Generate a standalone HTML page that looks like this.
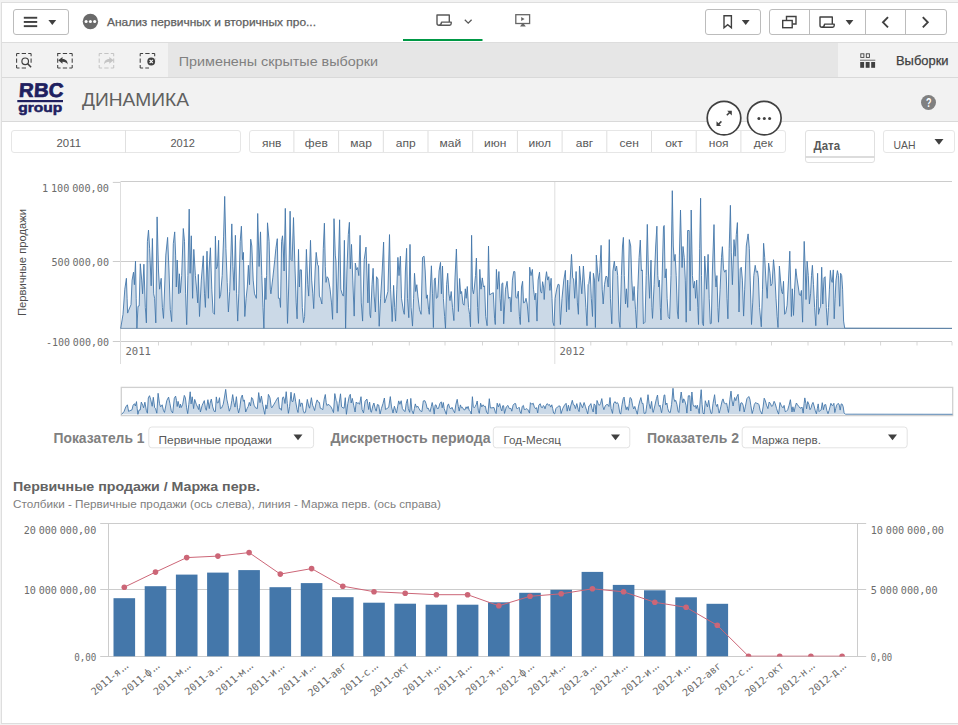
<!DOCTYPE html>
<html lang="ru"><head><meta charset="utf-8"><title>Анализ первичных и вторичных продаж</title>
<style>
html,body{margin:0;padding:0;background:#fff;}
body{width:958px;height:725px;position:relative;overflow:hidden;font-family:"Liberation Sans",sans-serif;}
.b{position:absolute;}
svg.ov{position:absolute;left:0;top:0;}
</style></head><body>
<div class="b" style="left:0px;top:0px;width:958px;height:725px;background:#ffffff;"></div>
<div class="b" style="left:0px;top:0px;width:958px;height:725px;background:#f2f2f2;"></div>
<div class="b" style="left:1px;top:2px;width:957px;height:722px;background:#dedede;"></div>
<div class="b" style="left:2px;top:3px;width:956px;height:720px;background:#ffffff;"></div>
<div class="b" style="left:2px;top:42px;width:956px;height:36px;background:#e6e6e6;"></div>
<div class="b" style="left:2px;top:42px;width:166px;height:36px;background:#f2f2f2;"></div>
<div class="b" style="left:838px;top:42px;width:120px;height:36px;background:#f2f2f2;"></div>
<div class="b" style="left:2px;top:77px;width:956px;height:1px;background:#d9d9d9;"></div>
<div class="b" style="left:2px;top:42px;width:956px;height:1px;background:#dddddd;"></div>
<div class="b" style="left:2px;top:78px;width:956px;height:44px;background:#f2f2f2;"></div>
<div class="b" style="left:2px;top:121px;width:956px;height:1px;background:#d9d9d9;"></div>
<div class="b" style="left:13px;top:9px;width:56px;height:26px;background:#fff;border:1px solid #bcbcbc;box-sizing:border-box;border-radius:3px;"></div>
<div class="b" style="left:705px;top:9px;width:56px;height:26px;background:#fff;border:1px solid #bcbcbc;box-sizing:border-box;border-radius:3px;"></div>
<div class="b" style="left:769px;top:9px;width:178px;height:26px;background:#fff;border:1px solid #bcbcbc;box-sizing:border-box;border-radius:3px;"></div>
<div class="b" style="left:809px;top:9px;width:1px;height:26px;background:#bcbcbc;"></div>
<div class="b" style="left:865px;top:9px;width:1px;height:26px;background:#bcbcbc;"></div>
<div class="b" style="left:905px;top:9px;width:1px;height:26px;background:#bcbcbc;"></div>
<div class="b" style="left:11px;top:130px;width:230px;height:23px;background:#fff;border:1px solid #e6e6e6;box-sizing:border-box;border-radius:3px;"></div>
<div class="b" style="left:125px;top:130px;width:1px;height:23px;background:#e0e0e0;"></div>
<div class="b" style="left:249px;top:130px;width:537px;height:23px;background:#fff;border:1px solid #e6e6e6;box-sizing:border-box;border-radius:3px;"></div>
<div class="b" style="left:805px;top:130px;width:70px;height:33px;background:#fff;border:1px solid #e0e0e0;box-sizing:border-box;border-radius:3px;"></div>
<div class="b" style="left:805px;top:156px;width:70px;height:2px;background:#dcdcdc;"></div>
<div class="b" style="left:883px;top:130px;width:72px;height:23px;background:#fff;border:1px solid #e6e6e6;box-sizing:border-box;border-radius:3px;"></div>
<svg class="ov" width="958" height="725" viewBox="0 0 958 725">
<g fill="#404040"><rect x="23.8" y="16.8" width="13.4" height="1.9"/><rect x="23.8" y="21" width="13.4" height="1.9"/><rect x="23.8" y="25.2" width="13.4" height="1.9"/><path d="M48.4 19.9h7.8l-3.9 5.1z"/></g>
<circle cx="90.4" cy="21.5" r="7.7" fill="#6a6a6a"/><g fill="#fff"><circle cx="86.1" cy="21.5" r="1.55"/><circle cx="90.4" cy="21.5" r="1.55"/><circle cx="94.7" cy="21.5" r="1.55"/></g>
<text x="107.00" y="25.90" font-size="11" font-weight="normal" fill="#606060" font-family='"Liberation Sans", sans-serif' textLength="209.00" lengthAdjust="spacingAndGlyphs" stroke="#606060" stroke-width="0.25">Анализ первичных и вторичных про...</text>
<rect x="403" y="39" width="79.5" height="2" fill="#009845"/>
<g transform="translate(0,0)" fill="none" stroke="#595959" stroke-width="1.4" stroke-linejoin="round"><path d="M449.3 22.1V15H437V23.2Q437 25.2 439 25.2H449.6Q451.2 25.2 451.2 23.6V22.1H441.6Q441.2 25.2 439 25.2"/></g><path d="M464.8 19.7l3.4 3.4 3.4-3.4" fill="none" stroke="#595959" stroke-width="1.3"/>
<rect x="515.8" y="14.7" width="13.8" height="8.8" fill="none" stroke="#666" stroke-width="1.3"/><path d="M522.2 23.5L520 26.5H525.8L523.6 23.5Z" fill="#666"/><path d="M521.2 16.9l3.4 2.1-3.4 2.1z" fill="#666"/>
<path d="M724 15.8h7.4v12l-3.7-3.2-3.7 3.2z" fill="none" stroke="#404040" stroke-width="1.4"/><path d="M741.8 20h7.8l-3.9 5z" fill="#404040"/>
<g fill="none" stroke="#404040" stroke-width="1.4"><path d="M786.5 20.5v-4h9.5v7.5h-3.5"/><rect x="782.7" y="20.5" width="9.5" height="7.2"/></g>
<g transform="translate(383,2)" fill="none" stroke="#404040" stroke-width="1.4" stroke-linejoin="round"><path d="M449.3 22.1V15H437V23.2Q437 25.2 439 25.2H449.6Q451.2 25.2 451.2 23.6V22.1H441.6Q441.2 25.2 439 25.2"/></g><path d="M845.6 20h7.8l-3.9 5z" fill="#404040"/>
<g fill="none" stroke="#404040" stroke-width="1.9"><path d="M888 17.2l-5 5.1 5 5.1"/><path d="M922.8 17.2l5 5.1-5 5.1"/></g>
<rect x="16.6" y="53.4" width="14.5" height="14.5" fill="none" stroke="#404040" stroke-width="1.05" stroke-dasharray="2.9 2.2 4.3 2.2 2.9 0"/><rect x="27.5" y="63.5" width="5" height="5.5" fill="#f2f2f2"/><circle cx="25.2" cy="61.3" r="3.3" fill="#f2f2f2" stroke="#404040" stroke-width="1.2"/><path d="M27.7 63.8l3.4 3.4" stroke="#404040" stroke-width="1.6"/>
<rect x="57.7" y="53.4" width="14.5" height="14.5" fill="none" stroke="#404040" stroke-width="1.05" stroke-dasharray="2.9 2.2 4.3 2.2 2.9 0"/><path d="M58.2 60.2l4.3-3.3v2.1c3.6 0 5.2 2.2 5.2 5.6-1-2.1-2.6-2.9-5.2-2.9v2.1z" fill="#404040"/>
<rect x="99.2" y="53.4" width="14.5" height="14.5" fill="none" stroke="#c4c4c4" stroke-width="1.05" stroke-dasharray="2.9 2.2 4.3 2.2 2.9 0"/><path d="M113.6 60.2l-4.3-3.3v2.1c-3.6 0-5.2 2.2-5.2 5.6 1-2.1 2.6-2.9 5.2-2.9v2.1z" fill="#c4c4c4"/>
<rect x="140.2" y="53.4" width="14.5" height="14.5" fill="none" stroke="#404040" stroke-width="1.05" stroke-dasharray="2.9 2.2 4.3 2.2 2.9 0"/><circle cx="151.2" cy="61.5" r="4.8" fill="#f2f2f2"/><rect x="149" y="63" width="7" height="6" fill="#f2f2f2"/><circle cx="151.2" cy="61.5" r="3.9" fill="#404040"/><path d="M149.6 59.9l3.2 3.2M152.8 59.9l-3.2 3.2" stroke="#fff" stroke-width="1.2"/>
<text x="178.80" y="66.30" font-size="13" font-weight="normal" fill="#808080" font-family='"Liberation Sans", sans-serif' textLength="199.20" lengthAdjust="spacingAndGlyphs" >Применены скрытые выборки</text>
<g fill="#404040"><rect x="860.2" y="62" width="3.9" height="5.8"/><rect x="865.7" y="62" width="3.9" height="5.8"/><rect x="871.2" y="62" width="3.9" height="5.8"/><rect x="860" y="59.7" width="15.3" height="1" fill="#707070"/></g><g fill="none" stroke="#404040" stroke-width="0.9"><rect x="860.8" y="53.8" width="3.1" height="3.6"/><rect x="866.3" y="53.8" width="3.1" height="3.6"/></g>
<text x="896.00" y="64.80" font-size="13" font-weight="normal" fill="#404040" font-family='"Liberation Sans", sans-serif' textLength="52.50" lengthAdjust="spacingAndGlyphs" stroke="#404040" stroke-width="0.25">Выборки</text>
<g fill="#20205f"><rect x="17.3" y="100" width="45.7" height="2.2"/></g>
<text x="18.60" y="97.70" font-size="20" font-weight="bold" fill="#20205f" font-family='"Liberation Sans", sans-serif' textLength="44.40" lengthAdjust="spacingAndGlyphs" stroke="#20205f" stroke-width="0.7" transform="skewX(-4) translate(6.8,-0.5)">RBC</text>
<text x="18.30" y="111.80" font-size="13" font-weight="bold" fill="#20205f" font-family='"Liberation Sans", sans-serif' textLength="44.00" lengthAdjust="spacingAndGlyphs" stroke="#20205f" stroke-width="0.5">group</text>
<text x="82.00" y="106.30" font-size="18.5" font-weight="normal" fill="#606060" font-family='"Liberation Sans", sans-serif' textLength="107.00" lengthAdjust="spacingAndGlyphs" >ДИНАМИКА</text>
<circle cx="928.5" cy="102.5" r="7.5" fill="#808080"/>
<text x="926.00" y="106.90" font-size="12.3" font-weight="bold" fill="#fff" font-family='"Liberation Sans", sans-serif' textLength="5.50" lengthAdjust="spacingAndGlyphs" >?</text>
<text x="56.50" y="147.00" font-size="11.2" font-weight="normal" fill="#595959" font-family='"Liberation Sans", sans-serif' textLength="24.50" lengthAdjust="spacingAndGlyphs" >2011</text>
<text x="170.50" y="147.00" font-size="11.2" font-weight="normal" fill="#595959" font-family='"Liberation Sans", sans-serif' textLength="24.50" lengthAdjust="spacingAndGlyphs" >2012</text>
<text x="261.90" y="147.00" font-size="11.3" font-weight="normal" fill="#595959" font-family='"Liberation Sans", sans-serif' textLength="19.50" lengthAdjust="spacingAndGlyphs" >янв</text>
<rect x="293.40" y="131" width="1" height="21" fill="#dedede"/>
<text x="304.89" y="147.00" font-size="11.3" font-weight="normal" fill="#595959" font-family='"Liberation Sans", sans-serif' textLength="22.92" lengthAdjust="spacingAndGlyphs" >фев</text>
<rect x="338.10" y="131" width="1" height="21" fill="#dedede"/>
<text x="350.25" y="147.00" font-size="11.3" font-weight="normal" fill="#595959" font-family='"Liberation Sans", sans-serif' textLength="21.60" lengthAdjust="spacingAndGlyphs" >мар</text>
<rect x="382.80" y="131" width="1" height="21" fill="#dedede"/>
<text x="395.83" y="147.00" font-size="11.3" font-weight="normal" fill="#595959" font-family='"Liberation Sans", sans-serif' textLength="19.85" lengthAdjust="spacingAndGlyphs" >апр</text>
<rect x="427.50" y="131" width="1" height="21" fill="#dedede"/>
<text x="439.64" y="147.00" font-size="11.3" font-weight="normal" fill="#595959" font-family='"Liberation Sans", sans-serif' textLength="21.63" lengthAdjust="spacingAndGlyphs" >май</text>
<rect x="472.20" y="131" width="1" height="21" fill="#dedede"/>
<text x="483.99" y="147.00" font-size="11.3" font-weight="normal" fill="#595959" font-family='"Liberation Sans", sans-serif' textLength="22.33" lengthAdjust="spacingAndGlyphs" >июн</text>
<rect x="516.90" y="131" width="1" height="21" fill="#dedede"/>
<text x="528.63" y="147.00" font-size="11.3" font-weight="normal" fill="#595959" font-family='"Liberation Sans", sans-serif' textLength="22.44" lengthAdjust="spacingAndGlyphs" >июл</text>
<rect x="561.60" y="131" width="1" height="21" fill="#dedede"/>
<text x="575.84" y="147.00" font-size="11.3" font-weight="normal" fill="#595959" font-family='"Liberation Sans", sans-serif' textLength="17.42" lengthAdjust="spacingAndGlyphs" >авг</text>
<rect x="606.30" y="131" width="1" height="21" fill="#dedede"/>
<text x="619.60" y="147.00" font-size="11.3" font-weight="normal" fill="#595959" font-family='"Liberation Sans", sans-serif' textLength="19.30" lengthAdjust="spacingAndGlyphs" >сен</text>
<rect x="651.00" y="131" width="1" height="21" fill="#dedede"/>
<text x="665.17" y="147.00" font-size="11.3" font-weight="normal" fill="#595959" font-family='"Liberation Sans", sans-serif' textLength="17.55" lengthAdjust="spacingAndGlyphs" >окт</text>
<rect x="695.70" y="131" width="1" height="21" fill="#dedede"/>
<text x="708.75" y="147.00" font-size="11.3" font-weight="normal" fill="#595959" font-family='"Liberation Sans", sans-serif' textLength="19.80" lengthAdjust="spacingAndGlyphs" >ноя</text>
<rect x="740.40" y="131" width="1" height="21" fill="#dedede"/>
<text x="753.89" y="147.00" font-size="11.3" font-weight="normal" fill="#595959" font-family='"Liberation Sans", sans-serif' textLength="18.92" lengthAdjust="spacingAndGlyphs" >дек</text>
<g fill="#ffffff" stroke="#404040" stroke-width="1.7"><circle cx="724" cy="118.1" r="16.8"/><circle cx="764.3" cy="118.1" r="16.8"/></g>
<g fill="#404040"><circle cx="758.9" cy="118.4" r="1.5"/><circle cx="764.3" cy="118.4" r="1.5"/><circle cx="769.6" cy="118.4" r="1.5"/></g>
<g fill="#404040" stroke="#404040" stroke-width="1.5"><path d="M726.8 115.3l3.2-3.2"/><path d="M727.2 110.8h4.6v4.6z" stroke="none"/><path d="M721.4 121.4l-3.2 3.2"/><path d="M716.5 121.3v4.6h4.6z" stroke="none"/></g>
<text x="813.50" y="149.50" font-size="12.5" font-weight="bold" fill="#595959" font-family='"Liberation Sans", sans-serif' textLength="26.50" lengthAdjust="spacingAndGlyphs" >Дата</text>
<text x="893.50" y="149.00" font-size="11.5" font-weight="normal" fill="#595959" font-family='"Liberation Sans", sans-serif' textLength="22.00" lengthAdjust="spacingAndGlyphs" >UAH</text>
<path d="M934.5 139h9l-4.5 5.8z" fill="#404040"/>
<g stroke="#cccccc" stroke-width="1" fill="none"><path d="M120.5 181.5H952"/><path d="M120.5 261.5H952"/><path d="M112.8 341.5H952"/><path d="M112.8 182.4H120.5M112.8 261.5H120.5"/></g>
<g stroke="#dedede" stroke-width="1" fill="none"><path d="M120.5 182V364"/><path d="M554.8 182V364"/></g>
<path d="M158.5 342v3.5M191.3 342v3.5M228.4 342v3.5M264.0 342v3.5M300.7 342v3.5M336.0 342v3.5M372.5 342v3.5M409.3 342v3.5M445.0 342v3.5M482.5 342v3.5M518.4 342v3.5M590.8 342v3.5M626.8 342v3.5M662.6 342v3.5M698.5 342v3.5M736.0 342v3.5M771.5 342v3.5M808.0 342v3.5M844.6 342v3.5M880.6 342v3.5M917.0 342v3.5M952.0 342v3.5" stroke="#d8d8d8" stroke-width="1" fill="none"/>
<text x="42.00" y="192.00" font-size="10.5" fill="#6c6c6c" font-family='"DejaVu Sans Mono", monospace' style="word-spacing:-3.4px" textLength="67.00" lengthAdjust="spacingAndGlyphs">1 100 000,00</text>
<text x="51.50" y="266.00" font-size="10.5" fill="#6c6c6c" font-family='"DejaVu Sans Mono", monospace' style="word-spacing:-3.4px" textLength="57.50" lengthAdjust="spacingAndGlyphs">500 000,00</text>
<text x="46.00" y="346.00" font-size="10.5" fill="#6c6c6c" font-family='"DejaVu Sans Mono", monospace' style="word-spacing:-3.4px" textLength="63.00" lengthAdjust="spacingAndGlyphs">-100 000,00</text>
<text x="125.50" y="354.90" font-size="10.5" fill="#6c6c6c" font-family='"DejaVu Sans Mono", monospace' style="word-spacing:-3.4px" textLength="25.50" lengthAdjust="spacingAndGlyphs">2011</text>
<text x="559.50" y="354.90" font-size="10.5" fill="#6c6c6c" font-family='"DejaVu Sans Mono", monospace' style="word-spacing:-3.4px" textLength="25.50" lengthAdjust="spacingAndGlyphs">2012</text>
<text transform="translate(26,316) rotate(-90)" font-size="11" fill="#4d4d4d" font-family='"Liberation Sans", sans-serif' textLength="107" lengthAdjust="spacingAndGlyphs">Первичные продажи</text>
<polygon points="120.5,328.4 120.7,328.4 123.0,314.3 124.8,289.2 126.4,278.3 127.1,298.3 127.6,313.1 128.7,310.2 131.0,304.7 132.1,280.1 133.5,272.2 134.4,284.7 135.5,261.2 136.2,298.3 136.9,328.4 138.0,306.3 139.2,305.9 140.3,263.8 141.7,280.1 142.6,293.8 143.9,264.2 145.3,307.4 146.4,322.9 147.4,241.4 148.5,230.1 149.6,248.3 151.2,285.8 152.4,238.5 153.7,293.8 154.6,298.3 155.8,322.9 157.1,216.9 158.5,271.0 159.6,289.2 161.2,278.3 162.4,307.4 163.5,318.4 165.8,255.1 167.6,237.4 169.0,271.0 170.3,309.7 171.7,321.6 173.3,243.7 174.7,231.9 175.6,255.1 176.3,287.0 177.2,260.1 178.1,280.1 178.8,293.8 179.4,273.8 180.4,292.7 181.7,275.6 183.3,228.5 184.5,241.4 185.6,293.8 186.7,324.7 187.9,275.6 189.2,209.1 190.1,273.3 191.3,235.8 192.6,298.3 193.8,249.4 195.4,275.6 197.0,293.8 197.7,302.9 198.3,274.4 199.5,316.5 201.3,280.1 203.3,255.8 204.5,293.8 205.4,307.4 207.0,251.2 208.4,298.3 209.0,271.0 210.4,247.8 211.8,289.2 213.1,312.5 214.5,314.3 215.4,236.2 216.3,268.8 217.5,266.5 218.6,240.3 219.5,298.3 220.6,294.9 222.2,275.6 223.6,236.9 224.7,196.4 225.9,248.3 227.2,282.4 228.4,312.0 229.7,291.5 230.9,255.1 231.8,223.9 232.9,266.5 234.1,290.4 235.4,235.3 236.6,293.8 237.7,321.1 238.8,293.8 240.2,241.4 241.4,226.2 242.5,259.7 243.4,252.4 244.8,316.5 246.1,298.3 247.3,287.0 248.4,265.3 249.5,284.7 250.7,239.2 251.8,246.0 253.2,280.1 254.5,293.8 256.4,298.3 257.7,213.5 259.1,266.5 260.5,231.9 261.8,275.6 263.0,307.4 263.9,328.4 265.0,277.9 265.9,299.5 266.6,275.6 267.5,222.8 269.1,241.4 270.3,289.2 270.9,293.8 272.8,277.9 274.8,259.7 275.9,248.3 277.3,238.7 278.4,298.3 279.6,298.3 280.5,307.4 281.6,241.4 282.5,235.8 283.2,246.0 284.1,271.0 285.3,208.4 286.4,271.0 287.5,323.4 288.7,287.0 290.1,211.2 291.0,259.7 292.1,260.8 293.5,217.6 294.8,261.9 296.2,302.9 297.1,318.8 298.5,249.4 299.4,287.0 300.1,269.9 301.4,269.9 302.3,307.4 303.5,322.7 304.6,316.5 306.4,249.4 307.8,284.7 308.7,296.1 310.5,240.3 311.7,280.1 312.8,293.8 313.7,308.6 315.1,271.0 316.2,252.4 317.6,264.7 318.5,266.0 319.4,296.1 320.5,298.3 321.9,304.0 323.3,248.3 324.4,223.2 325.3,266.5 326.0,282.4 327.1,276.7 328.3,278.3 330.1,289.2 331.5,302.9 332.6,319.3 334.0,218.7 335.3,255.1 336.0,261.9 337.1,313.1 338.3,271.0 339.6,219.8 340.8,289.2 342.1,293.8 343.3,296.1 344.4,240.3 345.6,328.4 346.9,271.0 348.3,234.6 349.4,222.3 350.3,268.8 351.5,244.4 352.8,280.1 354.2,316.1 355.3,263.1 356.5,269.9 357.6,267.6 358.8,275.6 360.1,235.3 361.3,302.9 362.6,321.1 364.2,259.7 366.0,247.1 367.2,280.1 367.9,302.9 368.8,263.8 369.9,314.3 370.6,317.7 372.0,284.7 373.1,268.3 374.2,296.1 375.4,312.0 376.5,276.7 377.9,279.0 379.2,326.3 380.6,298.3 382.2,271.0 383.6,242.1 384.7,302.9 386.1,298.3 387.9,291.5 389.5,234.6 390.6,289.2 392.2,321.6 393.6,285.4 394.7,307.4 395.6,321.1 396.8,289.2 397.9,257.4 399.0,275.6 400.4,256.2 401.5,298.3 403.4,310.9 404.3,314.3 405.4,271.0 406.6,248.3 407.5,298.3 408.8,317.7 410.0,244.4 411.1,307.4 412.5,326.1 413.6,298.3 414.5,273.3 415.7,291.5 416.8,284.7 417.9,296.1 419.5,309.7 421.1,314.3 422.5,257.4 424.1,256.2 425.2,271.0 426.4,298.3 427.3,294.9 428.6,309.7 429.3,314.3 430.4,287.0 431.4,265.8 432.5,293.8 433.4,327.5 434.3,280.1 435.2,277.9 436.4,298.3 437.7,297.2 439.1,271.0 440.5,262.4 441.4,293.8 442.5,266.0 443.4,298.3 444.6,316.5 445.5,328.4 446.6,284.7 447.7,273.3 448.9,293.8 450.0,300.6 451.2,291.5 452.5,307.4 453.9,320.6 455.0,277.9 456.4,249.0 457.5,287.0 458.4,311.5 459.6,278.5 460.7,293.8 461.6,291.5 463.0,304.0 464.1,305.2 465.3,288.8 466.2,298.3 467.3,286.5 468.5,307.4 469.6,314.3 470.5,326.8 471.6,235.3 472.5,289.2 473.5,293.8 474.4,287.0 475.5,275.6 476.4,258.1 477.6,307.4 478.5,323.4 479.8,269.4 481.0,289.2 482.3,277.9 483.5,287.0 484.6,285.8 485.7,316.5 487.1,325.7 488.5,246.0 489.6,294.9 491.2,293.8 493.3,292.7 494.6,318.8 495.3,324.5 496.4,269.4 497.6,289.2 498.9,271.5 500.1,298.3 501.0,310.9 501.9,283.6 502.8,282.9 503.7,323.8 505.5,289.2 507.1,281.3 508.5,298.3 510.1,297.2 511.0,312.0 512.4,280.1 513.7,271.5 514.9,271.7 515.8,297.2 516.9,298.3 518.3,291.1 519.4,316.5 520.3,324.5 521.5,287.0 522.6,281.3 523.5,302.9 524.9,302.2 526.0,298.3 527.2,304.0 528.8,322.2 529.7,267.2 531.0,275.6 532.4,269.4 533.5,289.2 534.9,299.9 535.8,293.1 537.0,321.1 538.1,280.1 539.5,272.2 540.6,291.5 541.7,293.1 542.6,281.7 543.6,287.0 544.2,299.5 545.4,280.1 546.5,271.7 547.7,280.1 548.8,276.7 549.9,290.4 551.1,278.3 552.0,298.3 552.9,322.2 554.0,325.7 555.1,298.3 556.7,289.2 558.1,284.2 559.2,284.7 560.4,324.5 562.0,298.3 563.8,280.1 565.4,270.4 566.5,312.0 567.7,280.1 569.0,309.7 569.9,284.7 571.5,254.4 572.7,277.9 573.6,279.0 574.7,298.3 576.1,271.5 577.4,302.9 578.4,314.3 579.5,266.0 580.6,280.1 581.8,293.8 583.4,266.0 584.7,287.0 585.9,307.4 587.0,325.7 588.1,284.7 588.8,283.6 590.2,271.7 591.3,298.3 592.5,316.5 593.4,273.3 594.5,280.1 595.4,327.5 596.3,255.1 597.5,271.0 598.6,281.3 599.7,272.2 601.1,245.3 602.2,289.2 603.2,304.0 604.5,284.7 605.9,276.3 607.0,276.7 608.2,287.0 609.3,239.6 610.4,298.3 611.8,323.8 612.9,271.0 614.3,261.2 615.4,271.0 616.6,266.0 617.7,275.6 619.1,321.1 620.0,327.5 621.4,275.6 622.5,246.0 623.4,237.4 624.3,275.6 625.5,304.0 626.4,288.8 627.7,307.4 628.6,271.0 629.3,239.6 630.7,246.0 631.8,280.1 633.0,300.6 634.1,286.5 635.5,309.7 636.6,327.9 637.8,289.2 639.1,257.4 640.3,240.1 641.4,271.0 642.3,269.9 643.4,323.8 645.0,322.2 646.2,275.6 647.3,224.4 648.4,271.0 649.6,298.3 651.0,260.1 651.9,307.4 652.5,318.4 654.1,284.7 655.7,246.0 656.9,226.2 657.8,275.6 658.7,287.0 659.4,280.1 660.3,307.4 661.0,320.0 662.3,271.0 663.5,226.7 664.2,225.5 665.1,277.9 666.2,268.8 667.1,298.3 668.2,316.5 669.6,318.8 671.0,275.6 672.3,190.7 673.3,246.0 674.2,260.8 675.1,254.4 676.2,275.6 677.4,312.0 678.3,318.8 679.4,255.1 680.5,210.0 681.4,246.0 682.1,267.6 683.0,246.5 684.2,257.4 685.3,280.1 686.2,322.2 687.6,230.5 689.2,230.5 690.1,310.9 691.2,210.0 692.4,275.6 693.5,288.1 694.6,281.3 695.6,298.3 696.7,280.1 697.8,307.4 698.5,324.5 699.7,248.3 700.6,198.2 701.5,275.6 702.4,323.4 703.5,325.7 704.7,256.2 705.6,271.0 706.7,289.2 708.1,254.4 709.2,298.3 710.3,323.8 711.3,323.4 712.4,271.0 714.0,224.6 714.9,271.0 716.0,287.0 716.9,275.6 717.9,307.4 718.5,322.2 720.1,289.2 721.5,257.4 722.4,246.7 723.5,268.8 724.7,272.2 726.1,269.9 727.0,298.3 727.9,318.8 729.2,248.3 730.4,205.3 731.3,252.8 732.4,284.7 734.0,239.6 735.2,256.2 736.3,234.6 737.4,222.6 738.3,271.0 739.0,312.0 740.2,268.8 741.3,267.2 742.4,280.1 743.6,316.1 744.7,289.2 746.3,246.0 748.1,233.9 749.3,248.3 750.2,280.1 751.5,324.5 752.7,302.9 753.8,275.6 755.2,265.3 756.3,272.2 757.5,271.0 758.4,277.9 759.5,307.4 761.3,326.8 762.5,289.2 763.6,243.3 764.7,257.4 765.9,280.1 767.2,298.3 768.6,263.1 770.0,273.3 770.9,285.8 772.1,283.6 773.5,259.7 774.6,271.0 776.0,298.3 777.1,316.5 778.0,327.5 779.4,266.0 780.5,280.1 781.6,291.5 782.6,293.8 783.5,281.3 784.6,314.3 785.7,313.1 787.1,305.2 788.5,280.1 789.8,251.2 790.8,289.2 791.4,316.5 792.3,288.8 793.5,315.4 794.6,289.2 795.8,268.8 796.9,277.9 798.3,287.0 799.4,294.9 800.5,295.6 801.4,290.4 802.6,322.2 803.5,271.0 804.2,241.4 805.3,271.0 806.0,299.5 807.1,261.2 808.3,275.6 809.4,304.0 810.6,293.8 811.5,275.6 812.4,265.3 813.5,284.7 814.6,307.4 815.8,325.7 816.7,298.3 817.6,273.3 818.5,314.3 819.7,308.6 820.6,306.3 821.7,267.2 822.8,304.0 824.0,277.9 825.1,276.7 826.3,307.4 827.4,325.2 828.5,307.4 829.4,289.2 830.4,270.4 831.3,280.1 832.2,282.4 833.3,269.9 834.2,318.8 835.1,298.3 836.0,280.1 837.4,270.6 838.5,275.6 839.7,306.3 840.6,273.3 841.7,275.6 842.6,289.2 843.6,321.1 844.7,328.2 952,328.4 952,328.4" fill="#4477aa" fill-opacity="0.28"/>
<polyline points="120.7,328.4 123.0,314.3 124.8,289.2 126.4,278.3 127.1,298.3 127.6,313.1 128.7,310.2 131.0,304.7 132.1,280.1 133.5,272.2 134.4,284.7 135.5,261.2 136.2,298.3 136.9,328.4 138.0,306.3 139.2,305.9 140.3,263.8 141.7,280.1 142.6,293.8 143.9,264.2 145.3,307.4 146.4,322.9 147.4,241.4 148.5,230.1 149.6,248.3 151.2,285.8 152.4,238.5 153.7,293.8 154.6,298.3 155.8,322.9 157.1,216.9 158.5,271.0 159.6,289.2 161.2,278.3 162.4,307.4 163.5,318.4 165.8,255.1 167.6,237.4 169.0,271.0 170.3,309.7 171.7,321.6 173.3,243.7 174.7,231.9 175.6,255.1 176.3,287.0 177.2,260.1 178.1,280.1 178.8,293.8 179.4,273.8 180.4,292.7 181.7,275.6 183.3,228.5 184.5,241.4 185.6,293.8 186.7,324.7 187.9,275.6 189.2,209.1 190.1,273.3 191.3,235.8 192.6,298.3 193.8,249.4 195.4,275.6 197.0,293.8 197.7,302.9 198.3,274.4 199.5,316.5 201.3,280.1 203.3,255.8 204.5,293.8 205.4,307.4 207.0,251.2 208.4,298.3 209.0,271.0 210.4,247.8 211.8,289.2 213.1,312.5 214.5,314.3 215.4,236.2 216.3,268.8 217.5,266.5 218.6,240.3 219.5,298.3 220.6,294.9 222.2,275.6 223.6,236.9 224.7,196.4 225.9,248.3 227.2,282.4 228.4,312.0 229.7,291.5 230.9,255.1 231.8,223.9 232.9,266.5 234.1,290.4 235.4,235.3 236.6,293.8 237.7,321.1 238.8,293.8 240.2,241.4 241.4,226.2 242.5,259.7 243.4,252.4 244.8,316.5 246.1,298.3 247.3,287.0 248.4,265.3 249.5,284.7 250.7,239.2 251.8,246.0 253.2,280.1 254.5,293.8 256.4,298.3 257.7,213.5 259.1,266.5 260.5,231.9 261.8,275.6 263.0,307.4 263.9,328.4 265.0,277.9 265.9,299.5 266.6,275.6 267.5,222.8 269.1,241.4 270.3,289.2 270.9,293.8 272.8,277.9 274.8,259.7 275.9,248.3 277.3,238.7 278.4,298.3 279.6,298.3 280.5,307.4 281.6,241.4 282.5,235.8 283.2,246.0 284.1,271.0 285.3,208.4 286.4,271.0 287.5,323.4 288.7,287.0 290.1,211.2 291.0,259.7 292.1,260.8 293.5,217.6 294.8,261.9 296.2,302.9 297.1,318.8 298.5,249.4 299.4,287.0 300.1,269.9 301.4,269.9 302.3,307.4 303.5,322.7 304.6,316.5 306.4,249.4 307.8,284.7 308.7,296.1 310.5,240.3 311.7,280.1 312.8,293.8 313.7,308.6 315.1,271.0 316.2,252.4 317.6,264.7 318.5,266.0 319.4,296.1 320.5,298.3 321.9,304.0 323.3,248.3 324.4,223.2 325.3,266.5 326.0,282.4 327.1,276.7 328.3,278.3 330.1,289.2 331.5,302.9 332.6,319.3 334.0,218.7 335.3,255.1 336.0,261.9 337.1,313.1 338.3,271.0 339.6,219.8 340.8,289.2 342.1,293.8 343.3,296.1 344.4,240.3 345.6,328.4 346.9,271.0 348.3,234.6 349.4,222.3 350.3,268.8 351.5,244.4 352.8,280.1 354.2,316.1 355.3,263.1 356.5,269.9 357.6,267.6 358.8,275.6 360.1,235.3 361.3,302.9 362.6,321.1 364.2,259.7 366.0,247.1 367.2,280.1 367.9,302.9 368.8,263.8 369.9,314.3 370.6,317.7 372.0,284.7 373.1,268.3 374.2,296.1 375.4,312.0 376.5,276.7 377.9,279.0 379.2,326.3 380.6,298.3 382.2,271.0 383.6,242.1 384.7,302.9 386.1,298.3 387.9,291.5 389.5,234.6 390.6,289.2 392.2,321.6 393.6,285.4 394.7,307.4 395.6,321.1 396.8,289.2 397.9,257.4 399.0,275.6 400.4,256.2 401.5,298.3 403.4,310.9 404.3,314.3 405.4,271.0 406.6,248.3 407.5,298.3 408.8,317.7 410.0,244.4 411.1,307.4 412.5,326.1 413.6,298.3 414.5,273.3 415.7,291.5 416.8,284.7 417.9,296.1 419.5,309.7 421.1,314.3 422.5,257.4 424.1,256.2 425.2,271.0 426.4,298.3 427.3,294.9 428.6,309.7 429.3,314.3 430.4,287.0 431.4,265.8 432.5,293.8 433.4,327.5 434.3,280.1 435.2,277.9 436.4,298.3 437.7,297.2 439.1,271.0 440.5,262.4 441.4,293.8 442.5,266.0 443.4,298.3 444.6,316.5 445.5,328.4 446.6,284.7 447.7,273.3 448.9,293.8 450.0,300.6 451.2,291.5 452.5,307.4 453.9,320.6 455.0,277.9 456.4,249.0 457.5,287.0 458.4,311.5 459.6,278.5 460.7,293.8 461.6,291.5 463.0,304.0 464.1,305.2 465.3,288.8 466.2,298.3 467.3,286.5 468.5,307.4 469.6,314.3 470.5,326.8 471.6,235.3 472.5,289.2 473.5,293.8 474.4,287.0 475.5,275.6 476.4,258.1 477.6,307.4 478.5,323.4 479.8,269.4 481.0,289.2 482.3,277.9 483.5,287.0 484.6,285.8 485.7,316.5 487.1,325.7 488.5,246.0 489.6,294.9 491.2,293.8 493.3,292.7 494.6,318.8 495.3,324.5 496.4,269.4 497.6,289.2 498.9,271.5 500.1,298.3 501.0,310.9 501.9,283.6 502.8,282.9 503.7,323.8 505.5,289.2 507.1,281.3 508.5,298.3 510.1,297.2 511.0,312.0 512.4,280.1 513.7,271.5 514.9,271.7 515.8,297.2 516.9,298.3 518.3,291.1 519.4,316.5 520.3,324.5 521.5,287.0 522.6,281.3 523.5,302.9 524.9,302.2 526.0,298.3 527.2,304.0 528.8,322.2 529.7,267.2 531.0,275.6 532.4,269.4 533.5,289.2 534.9,299.9 535.8,293.1 537.0,321.1 538.1,280.1 539.5,272.2 540.6,291.5 541.7,293.1 542.6,281.7 543.6,287.0 544.2,299.5 545.4,280.1 546.5,271.7 547.7,280.1 548.8,276.7 549.9,290.4 551.1,278.3 552.0,298.3 552.9,322.2 554.0,325.7 555.1,298.3 556.7,289.2 558.1,284.2 559.2,284.7 560.4,324.5 562.0,298.3 563.8,280.1 565.4,270.4 566.5,312.0 567.7,280.1 569.0,309.7 569.9,284.7 571.5,254.4 572.7,277.9 573.6,279.0 574.7,298.3 576.1,271.5 577.4,302.9 578.4,314.3 579.5,266.0 580.6,280.1 581.8,293.8 583.4,266.0 584.7,287.0 585.9,307.4 587.0,325.7 588.1,284.7 588.8,283.6 590.2,271.7 591.3,298.3 592.5,316.5 593.4,273.3 594.5,280.1 595.4,327.5 596.3,255.1 597.5,271.0 598.6,281.3 599.7,272.2 601.1,245.3 602.2,289.2 603.2,304.0 604.5,284.7 605.9,276.3 607.0,276.7 608.2,287.0 609.3,239.6 610.4,298.3 611.8,323.8 612.9,271.0 614.3,261.2 615.4,271.0 616.6,266.0 617.7,275.6 619.1,321.1 620.0,327.5 621.4,275.6 622.5,246.0 623.4,237.4 624.3,275.6 625.5,304.0 626.4,288.8 627.7,307.4 628.6,271.0 629.3,239.6 630.7,246.0 631.8,280.1 633.0,300.6 634.1,286.5 635.5,309.7 636.6,327.9 637.8,289.2 639.1,257.4 640.3,240.1 641.4,271.0 642.3,269.9 643.4,323.8 645.0,322.2 646.2,275.6 647.3,224.4 648.4,271.0 649.6,298.3 651.0,260.1 651.9,307.4 652.5,318.4 654.1,284.7 655.7,246.0 656.9,226.2 657.8,275.6 658.7,287.0 659.4,280.1 660.3,307.4 661.0,320.0 662.3,271.0 663.5,226.7 664.2,225.5 665.1,277.9 666.2,268.8 667.1,298.3 668.2,316.5 669.6,318.8 671.0,275.6 672.3,190.7 673.3,246.0 674.2,260.8 675.1,254.4 676.2,275.6 677.4,312.0 678.3,318.8 679.4,255.1 680.5,210.0 681.4,246.0 682.1,267.6 683.0,246.5 684.2,257.4 685.3,280.1 686.2,322.2 687.6,230.5 689.2,230.5 690.1,310.9 691.2,210.0 692.4,275.6 693.5,288.1 694.6,281.3 695.6,298.3 696.7,280.1 697.8,307.4 698.5,324.5 699.7,248.3 700.6,198.2 701.5,275.6 702.4,323.4 703.5,325.7 704.7,256.2 705.6,271.0 706.7,289.2 708.1,254.4 709.2,298.3 710.3,323.8 711.3,323.4 712.4,271.0 714.0,224.6 714.9,271.0 716.0,287.0 716.9,275.6 717.9,307.4 718.5,322.2 720.1,289.2 721.5,257.4 722.4,246.7 723.5,268.8 724.7,272.2 726.1,269.9 727.0,298.3 727.9,318.8 729.2,248.3 730.4,205.3 731.3,252.8 732.4,284.7 734.0,239.6 735.2,256.2 736.3,234.6 737.4,222.6 738.3,271.0 739.0,312.0 740.2,268.8 741.3,267.2 742.4,280.1 743.6,316.1 744.7,289.2 746.3,246.0 748.1,233.9 749.3,248.3 750.2,280.1 751.5,324.5 752.7,302.9 753.8,275.6 755.2,265.3 756.3,272.2 757.5,271.0 758.4,277.9 759.5,307.4 761.3,326.8 762.5,289.2 763.6,243.3 764.7,257.4 765.9,280.1 767.2,298.3 768.6,263.1 770.0,273.3 770.9,285.8 772.1,283.6 773.5,259.7 774.6,271.0 776.0,298.3 777.1,316.5 778.0,327.5 779.4,266.0 780.5,280.1 781.6,291.5 782.6,293.8 783.5,281.3 784.6,314.3 785.7,313.1 787.1,305.2 788.5,280.1 789.8,251.2 790.8,289.2 791.4,316.5 792.3,288.8 793.5,315.4 794.6,289.2 795.8,268.8 796.9,277.9 798.3,287.0 799.4,294.9 800.5,295.6 801.4,290.4 802.6,322.2 803.5,271.0 804.2,241.4 805.3,271.0 806.0,299.5 807.1,261.2 808.3,275.6 809.4,304.0 810.6,293.8 811.5,275.6 812.4,265.3 813.5,284.7 814.6,307.4 815.8,325.7 816.7,298.3 817.6,273.3 818.5,314.3 819.7,308.6 820.6,306.3 821.7,267.2 822.8,304.0 824.0,277.9 825.1,276.7 826.3,307.4 827.4,325.2 828.5,307.4 829.4,289.2 830.4,270.4 831.3,280.1 832.2,282.4 833.3,269.9 834.2,318.8 835.1,298.3 836.0,280.1 837.4,270.6 838.5,275.6 839.7,306.3 840.6,273.3 841.7,275.6 842.6,289.2 843.6,321.1 844.7,328.2 952,328.4" fill="none" stroke="#4477aa" stroke-width="0.9" stroke-linejoin="miter" stroke-miterlimit="6"/>
<path d="M120.5 328.4H952" stroke="#5f7f9f" stroke-width="0.8" fill="none"/>
<rect x="121.3" y="387.4" width="831.4" height="28.2" fill="#fff" stroke="#d0d0d0" stroke-width="1.3"/>
<polygon points="121.5,414.3 121.7,414.3 124.0,411.6 125.8,406.9 127.4,404.8 128.1,408.6 128.6,411.4 129.7,410.8 132.0,409.8 133.1,405.2 134.5,403.7 135.4,406.0 136.5,401.6 137.2,408.6 137.9,414.3 139.0,410.1 140.2,410.0 141.3,402.1 142.7,405.2 143.6,407.8 144.9,402.2 146.3,410.3 147.4,413.2 148.3,397.9 149.5,395.7 150.6,399.2 152.2,406.3 153.3,397.3 154.7,407.8 155.6,408.6 156.8,413.2 158.1,393.3 159.5,403.5 160.6,406.9 162.2,404.8 163.4,410.3 164.5,412.4 166.8,400.5 168.6,397.1 169.9,403.5 171.3,410.8 172.7,413.0 174.3,398.3 175.6,396.1 176.5,400.5 177.2,406.5 178.1,401.4 179.0,405.2 179.7,407.8 180.4,404.0 181.3,407.5 182.7,404.3 184.3,395.4 185.4,397.9 186.6,407.8 187.7,413.6 188.8,404.3 190.2,391.8 191.1,403.9 192.2,396.8 193.6,408.6 194.7,399.4 196.3,404.3 197.9,407.8 198.6,409.5 199.3,404.1 200.4,412.0 202.2,405.2 204.3,400.6 205.4,407.8 206.3,410.3 207.9,399.7 209.3,408.6 210.0,403.5 211.3,399.1 212.7,406.9 214.1,411.3 215.4,411.6 216.3,396.9 217.3,403.0 218.4,402.6 219.5,397.7 220.4,408.6 221.6,408.0 223.2,404.3 224.5,397.0 225.7,389.4 226.8,399.2 228.2,405.6 229.3,411.2 230.7,407.3 231.8,400.5 232.7,394.6 233.9,402.6 235.0,407.1 236.4,396.7 237.5,407.8 238.6,412.9 239.8,407.8 241.1,397.9 242.3,395.0 243.4,401.3 244.3,399.9 245.7,412.0 247.1,408.6 248.2,406.5 249.3,402.4 250.5,406.0 251.6,397.5 252.7,398.7 254.1,405.2 255.5,407.8 257.3,408.6 258.7,392.6 260.0,402.6 261.4,396.1 262.7,404.3 263.9,410.3 264.8,414.3 265.9,404.8 266.8,408.8 267.5,404.3 268.4,394.4 270.0,397.9 271.2,406.9 271.8,407.8 273.7,404.8 275.7,401.3 276.8,399.2 278.2,397.4 279.4,408.6 280.5,408.6 281.4,410.3 282.5,397.9 283.4,396.8 284.1,398.7 285.0,403.5 286.2,391.7 287.3,403.5 288.4,413.3 289.6,406.5 291.0,392.2 291.9,401.3 293.0,401.5 294.4,393.4 295.7,401.8 297.1,409.5 298.0,412.5 299.4,399.4 300.3,406.5 301.0,403.3 302.3,403.3 303.2,410.3 304.4,413.2 305.5,412.0 307.3,399.4 308.7,406.0 309.6,408.2 311.4,397.7 312.6,405.2 313.7,407.8 314.6,410.5 316.0,403.5 317.1,399.9 318.5,402.3 319.4,402.5 320.3,408.2 321.4,408.6 322.8,409.7 324.2,399.2 325.3,394.5 326.2,402.6 326.9,405.6 328.0,404.5 329.2,404.8 331.0,406.9 332.3,409.5 333.5,412.6 334.8,393.6 336.2,400.5 336.9,401.8 338.0,411.4 339.1,403.5 340.5,393.8 341.6,406.9 343.0,407.8 344.1,408.2 345.3,397.7 346.4,414.3 347.8,403.5 349.2,396.6 350.3,394.3 351.2,403.0 352.3,398.4 353.7,405.2 355.1,412.0 356.2,402.0 357.3,403.3 358.5,402.8 359.6,404.3 361.0,396.7 362.1,409.5 363.5,412.9 365.1,401.3 366.9,399.0 368.0,405.2 368.7,409.5 369.6,402.1 370.8,411.6 371.4,412.3 372.8,406.0 373.9,403.0 375.1,408.2 376.2,411.2 377.4,404.5 378.7,405.0 380.1,413.9 381.4,408.6 383.0,403.5 384.4,398.0 385.5,409.5 386.9,408.6 388.7,407.3 390.3,396.6 391.5,406.9 393.0,413.0 394.4,406.2 395.6,410.3 396.5,412.9 397.6,406.9 398.7,400.9 399.9,404.3 401.2,400.7 402.4,408.6 404.2,411.0 405.1,411.6 406.2,403.5 407.4,399.2 408.3,408.6 409.7,412.3 410.8,398.4 411.9,410.3 413.3,413.8 414.4,408.6 415.3,403.9 416.5,407.3 417.6,406.0 418.8,408.2 420.3,410.8 421.9,411.6 423.3,400.9 424.9,400.7 426.0,403.5 427.2,408.6 428.1,408.0 429.4,410.8 430.1,411.6 431.3,406.5 432.2,402.5 433.3,407.8 434.2,414.1 435.1,405.2 436.0,404.8 437.2,408.6 438.5,408.4 439.9,403.5 441.3,401.8 442.2,407.8 443.3,402.5 444.2,408.6 445.4,412.0 446.3,414.3 447.4,406.0 448.5,403.9 449.7,407.8 450.8,409.0 452.0,407.3 453.3,410.3 454.7,412.8 455.8,404.8 457.2,399.3 458.3,406.5 459.2,411.1 460.4,404.9 461.5,407.8 462.4,407.3 463.8,409.7 464.9,409.9 466.1,406.8 467.0,408.6 468.1,406.4 469.2,410.3 470.4,411.6 471.3,414.0 472.4,396.7 473.3,406.9 474.2,407.8 475.2,406.5 476.3,404.3 477.2,401.0 478.3,410.3 479.3,413.3 480.6,403.2 481.8,406.9 483.1,404.8 484.3,406.5 485.4,406.3 486.5,412.0 487.9,413.8 489.3,398.7 490.4,408.0 492.0,407.8 494.0,407.5 495.4,412.5 496.1,413.5 497.2,403.2 498.4,406.9 499.7,403.6 500.9,408.6 501.8,411.0 502.7,405.8 503.6,405.7 504.5,413.4 506.3,406.9 507.9,405.4 509.3,408.6 510.9,408.4 511.8,411.2 513.1,405.2 514.5,403.6 515.6,403.6 516.6,408.4 517.7,408.6 519.1,407.2 520.2,412.0 521.1,413.5 522.2,406.5 523.4,405.4 524.3,409.5 525.7,409.3 526.8,408.6 527.9,409.7 529.5,413.1 530.4,402.7 531.8,404.3 533.2,403.2 534.3,406.9 535.7,408.9 536.6,407.6 537.7,412.9 538.8,405.2 540.2,403.7 541.3,407.3 542.5,407.6 543.4,405.5 544.3,406.5 545.0,408.8 546.1,405.2 547.3,403.6 548.4,405.2 549.5,404.5 550.7,407.1 551.8,404.8 552.7,408.6 553.6,413.1 554.7,413.8 555.9,408.6 557.5,406.9 558.8,406.0 560.0,406.0 561.1,413.5 562.7,408.6 564.5,405.2 566.1,403.3 567.2,411.2 568.4,405.2 569.8,410.8 570.7,406.0 572.3,400.3 573.4,404.8 574.3,405.0 575.4,408.6 576.8,403.6 578.2,409.5 579.1,411.6 580.2,402.5 581.4,405.2 582.5,407.8 584.1,402.5 585.4,406.5 586.6,410.3 587.7,413.8 588.9,406.0 589.5,405.8 590.9,403.6 592.0,408.6 593.2,412.0 594.1,403.9 595.2,405.2 596.1,414.1 597.0,400.5 598.2,403.5 599.3,405.4 600.5,403.7 601.8,398.6 603.0,406.9 603.9,409.7 605.2,406.0 606.6,404.5 607.7,404.5 608.9,406.5 610.0,397.5 611.1,408.6 612.5,413.4 613.6,403.5 615.0,401.6 616.1,403.5 617.3,402.5 618.4,404.3 619.8,412.9 620.7,414.1 622.1,404.3 623.2,398.7 624.1,397.1 625.0,404.3 626.2,409.7 627.1,406.8 628.4,410.3 629.3,403.5 630.0,397.5 631.4,398.7 632.5,405.2 633.7,409.0 634.8,406.4 636.2,410.8 637.3,414.2 638.4,406.9 639.8,400.9 640.9,397.6 642.1,403.5 643.0,403.3 644.1,413.4 645.7,413.1 646.9,404.3 648.0,394.7 649.1,403.5 650.3,408.6 651.6,401.4 652.5,410.3 653.2,412.4 654.8,406.0 656.4,398.7 657.5,395.0 658.5,404.3 659.4,406.5 660.0,405.2 661.0,410.3 661.6,412.7 663.0,403.5 664.1,395.1 664.8,394.9 665.7,404.8 666.9,403.0 667.8,408.6 668.9,412.0 670.3,412.5 671.6,404.3 673.0,388.3 673.9,398.7 674.8,401.5 675.7,400.3 676.9,404.3 678.0,411.2 678.9,412.5 680.1,400.5 681.2,392.0 682.1,398.7 682.8,402.8 683.7,398.8 684.8,400.9 686.0,405.2 686.9,413.1 688.3,395.8 689.8,395.8 690.8,411.0 691.9,392.0 693.0,404.3 694.2,406.7 695.3,405.4 696.2,408.6 697.3,405.2 698.5,410.3 699.2,413.5 700.3,399.2 701.2,389.7 702.1,404.3 703.0,413.3 704.2,413.8 705.3,400.7 706.2,403.5 707.4,406.9 708.7,400.3 709.9,408.6 711.0,413.4 711.9,413.3 713.0,403.5 714.6,394.7 715.5,403.5 716.7,406.5 717.6,404.3 718.5,410.3 719.2,413.1 720.8,406.9 722.1,400.9 723.0,398.9 724.2,403.0 725.3,403.7 726.7,403.3 727.6,408.6 728.5,412.5 729.9,399.2 731.0,391.1 731.9,400.0 733.1,406.0 734.6,397.5 735.8,400.7 736.9,396.6 738.1,394.3 739.0,403.5 739.7,411.2 740.8,403.0 741.9,402.7 743.1,405.2 744.2,412.0 745.3,406.9 746.9,398.7 748.8,396.5 749.9,399.2 750.8,405.2 752.2,413.5 753.3,409.5 754.4,404.3 755.8,402.4 756.9,403.7 758.1,403.5 759.0,404.8 760.1,410.3 761.9,414.0 763.1,406.9 764.2,398.2 765.4,400.9 766.5,405.2 767.9,408.6 769.2,402.0 770.6,403.9 771.5,406.3 772.7,405.8 774.1,401.3 775.2,403.5 776.6,408.6 777.7,412.0 778.6,414.1 780.0,402.5 781.1,405.2 782.3,407.3 783.2,407.8 784.1,405.4 785.2,411.6 786.3,411.4 787.7,409.9 789.1,405.2 790.4,399.7 791.3,406.9 792.0,412.0 792.9,406.8 794.1,411.8 795.2,406.9 796.4,403.0 797.5,404.8 798.9,406.5 800.0,408.0 801.1,408.1 802.0,407.1 803.2,413.1 804.1,403.5 804.8,397.9 805.9,403.5 806.6,408.8 807.7,401.6 808.9,404.3 810.0,409.7 811.1,407.8 812.0,404.3 813.0,402.4 814.1,406.0 815.2,410.3 816.4,413.8 817.3,408.6 818.2,403.9 819.1,411.6 820.2,410.5 821.1,410.1 822.3,402.7 823.4,409.7 824.6,404.8 825.7,404.5 826.8,410.3 828.0,413.7 829.1,410.3 830.0,406.9 830.9,403.3 831.8,405.2 832.7,405.6 833.9,403.3 834.8,412.5 835.7,408.6 836.6,405.2 838.0,403.4 839.1,404.3 840.2,410.1 841.2,403.9 842.3,404.3 843.2,406.9 844.1,412.9 845.3,414.2 952.5,414.3 952.5,414.3" fill="#4477aa" fill-opacity="0.28"/>
<polyline points="121.7,414.3 124.0,411.6 125.8,406.9 127.4,404.8 128.1,408.6 128.6,411.4 129.7,410.8 132.0,409.8 133.1,405.2 134.5,403.7 135.4,406.0 136.5,401.6 137.2,408.6 137.9,414.3 139.0,410.1 140.2,410.0 141.3,402.1 142.7,405.2 143.6,407.8 144.9,402.2 146.3,410.3 147.4,413.2 148.3,397.9 149.5,395.7 150.6,399.2 152.2,406.3 153.3,397.3 154.7,407.8 155.6,408.6 156.8,413.2 158.1,393.3 159.5,403.5 160.6,406.9 162.2,404.8 163.4,410.3 164.5,412.4 166.8,400.5 168.6,397.1 169.9,403.5 171.3,410.8 172.7,413.0 174.3,398.3 175.6,396.1 176.5,400.5 177.2,406.5 178.1,401.4 179.0,405.2 179.7,407.8 180.4,404.0 181.3,407.5 182.7,404.3 184.3,395.4 185.4,397.9 186.6,407.8 187.7,413.6 188.8,404.3 190.2,391.8 191.1,403.9 192.2,396.8 193.6,408.6 194.7,399.4 196.3,404.3 197.9,407.8 198.6,409.5 199.3,404.1 200.4,412.0 202.2,405.2 204.3,400.6 205.4,407.8 206.3,410.3 207.9,399.7 209.3,408.6 210.0,403.5 211.3,399.1 212.7,406.9 214.1,411.3 215.4,411.6 216.3,396.9 217.3,403.0 218.4,402.6 219.5,397.7 220.4,408.6 221.6,408.0 223.2,404.3 224.5,397.0 225.7,389.4 226.8,399.2 228.2,405.6 229.3,411.2 230.7,407.3 231.8,400.5 232.7,394.6 233.9,402.6 235.0,407.1 236.4,396.7 237.5,407.8 238.6,412.9 239.8,407.8 241.1,397.9 242.3,395.0 243.4,401.3 244.3,399.9 245.7,412.0 247.1,408.6 248.2,406.5 249.3,402.4 250.5,406.0 251.6,397.5 252.7,398.7 254.1,405.2 255.5,407.8 257.3,408.6 258.7,392.6 260.0,402.6 261.4,396.1 262.7,404.3 263.9,410.3 264.8,414.3 265.9,404.8 266.8,408.8 267.5,404.3 268.4,394.4 270.0,397.9 271.2,406.9 271.8,407.8 273.7,404.8 275.7,401.3 276.8,399.2 278.2,397.4 279.4,408.6 280.5,408.6 281.4,410.3 282.5,397.9 283.4,396.8 284.1,398.7 285.0,403.5 286.2,391.7 287.3,403.5 288.4,413.3 289.6,406.5 291.0,392.2 291.9,401.3 293.0,401.5 294.4,393.4 295.7,401.8 297.1,409.5 298.0,412.5 299.4,399.4 300.3,406.5 301.0,403.3 302.3,403.3 303.2,410.3 304.4,413.2 305.5,412.0 307.3,399.4 308.7,406.0 309.6,408.2 311.4,397.7 312.6,405.2 313.7,407.8 314.6,410.5 316.0,403.5 317.1,399.9 318.5,402.3 319.4,402.5 320.3,408.2 321.4,408.6 322.8,409.7 324.2,399.2 325.3,394.5 326.2,402.6 326.9,405.6 328.0,404.5 329.2,404.8 331.0,406.9 332.3,409.5 333.5,412.6 334.8,393.6 336.2,400.5 336.9,401.8 338.0,411.4 339.1,403.5 340.5,393.8 341.6,406.9 343.0,407.8 344.1,408.2 345.3,397.7 346.4,414.3 347.8,403.5 349.2,396.6 350.3,394.3 351.2,403.0 352.3,398.4 353.7,405.2 355.1,412.0 356.2,402.0 357.3,403.3 358.5,402.8 359.6,404.3 361.0,396.7 362.1,409.5 363.5,412.9 365.1,401.3 366.9,399.0 368.0,405.2 368.7,409.5 369.6,402.1 370.8,411.6 371.4,412.3 372.8,406.0 373.9,403.0 375.1,408.2 376.2,411.2 377.4,404.5 378.7,405.0 380.1,413.9 381.4,408.6 383.0,403.5 384.4,398.0 385.5,409.5 386.9,408.6 388.7,407.3 390.3,396.6 391.5,406.9 393.0,413.0 394.4,406.2 395.6,410.3 396.5,412.9 397.6,406.9 398.7,400.9 399.9,404.3 401.2,400.7 402.4,408.6 404.2,411.0 405.1,411.6 406.2,403.5 407.4,399.2 408.3,408.6 409.7,412.3 410.8,398.4 411.9,410.3 413.3,413.8 414.4,408.6 415.3,403.9 416.5,407.3 417.6,406.0 418.8,408.2 420.3,410.8 421.9,411.6 423.3,400.9 424.9,400.7 426.0,403.5 427.2,408.6 428.1,408.0 429.4,410.8 430.1,411.6 431.3,406.5 432.2,402.5 433.3,407.8 434.2,414.1 435.1,405.2 436.0,404.8 437.2,408.6 438.5,408.4 439.9,403.5 441.3,401.8 442.2,407.8 443.3,402.5 444.2,408.6 445.4,412.0 446.3,414.3 447.4,406.0 448.5,403.9 449.7,407.8 450.8,409.0 452.0,407.3 453.3,410.3 454.7,412.8 455.8,404.8 457.2,399.3 458.3,406.5 459.2,411.1 460.4,404.9 461.5,407.8 462.4,407.3 463.8,409.7 464.9,409.9 466.1,406.8 467.0,408.6 468.1,406.4 469.2,410.3 470.4,411.6 471.3,414.0 472.4,396.7 473.3,406.9 474.2,407.8 475.2,406.5 476.3,404.3 477.2,401.0 478.3,410.3 479.3,413.3 480.6,403.2 481.8,406.9 483.1,404.8 484.3,406.5 485.4,406.3 486.5,412.0 487.9,413.8 489.3,398.7 490.4,408.0 492.0,407.8 494.0,407.5 495.4,412.5 496.1,413.5 497.2,403.2 498.4,406.9 499.7,403.6 500.9,408.6 501.8,411.0 502.7,405.8 503.6,405.7 504.5,413.4 506.3,406.9 507.9,405.4 509.3,408.6 510.9,408.4 511.8,411.2 513.1,405.2 514.5,403.6 515.6,403.6 516.6,408.4 517.7,408.6 519.1,407.2 520.2,412.0 521.1,413.5 522.2,406.5 523.4,405.4 524.3,409.5 525.7,409.3 526.8,408.6 527.9,409.7 529.5,413.1 530.4,402.7 531.8,404.3 533.2,403.2 534.3,406.9 535.7,408.9 536.6,407.6 537.7,412.9 538.8,405.2 540.2,403.7 541.3,407.3 542.5,407.6 543.4,405.5 544.3,406.5 545.0,408.8 546.1,405.2 547.3,403.6 548.4,405.2 549.5,404.5 550.7,407.1 551.8,404.8 552.7,408.6 553.6,413.1 554.7,413.8 555.9,408.6 557.5,406.9 558.8,406.0 560.0,406.0 561.1,413.5 562.7,408.6 564.5,405.2 566.1,403.3 567.2,411.2 568.4,405.2 569.8,410.8 570.7,406.0 572.3,400.3 573.4,404.8 574.3,405.0 575.4,408.6 576.8,403.6 578.2,409.5 579.1,411.6 580.2,402.5 581.4,405.2 582.5,407.8 584.1,402.5 585.4,406.5 586.6,410.3 587.7,413.8 588.9,406.0 589.5,405.8 590.9,403.6 592.0,408.6 593.2,412.0 594.1,403.9 595.2,405.2 596.1,414.1 597.0,400.5 598.2,403.5 599.3,405.4 600.5,403.7 601.8,398.6 603.0,406.9 603.9,409.7 605.2,406.0 606.6,404.5 607.7,404.5 608.9,406.5 610.0,397.5 611.1,408.6 612.5,413.4 613.6,403.5 615.0,401.6 616.1,403.5 617.3,402.5 618.4,404.3 619.8,412.9 620.7,414.1 622.1,404.3 623.2,398.7 624.1,397.1 625.0,404.3 626.2,409.7 627.1,406.8 628.4,410.3 629.3,403.5 630.0,397.5 631.4,398.7 632.5,405.2 633.7,409.0 634.8,406.4 636.2,410.8 637.3,414.2 638.4,406.9 639.8,400.9 640.9,397.6 642.1,403.5 643.0,403.3 644.1,413.4 645.7,413.1 646.9,404.3 648.0,394.7 649.1,403.5 650.3,408.6 651.6,401.4 652.5,410.3 653.2,412.4 654.8,406.0 656.4,398.7 657.5,395.0 658.5,404.3 659.4,406.5 660.0,405.2 661.0,410.3 661.6,412.7 663.0,403.5 664.1,395.1 664.8,394.9 665.7,404.8 666.9,403.0 667.8,408.6 668.9,412.0 670.3,412.5 671.6,404.3 673.0,388.3 673.9,398.7 674.8,401.5 675.7,400.3 676.9,404.3 678.0,411.2 678.9,412.5 680.1,400.5 681.2,392.0 682.1,398.7 682.8,402.8 683.7,398.8 684.8,400.9 686.0,405.2 686.9,413.1 688.3,395.8 689.8,395.8 690.8,411.0 691.9,392.0 693.0,404.3 694.2,406.7 695.3,405.4 696.2,408.6 697.3,405.2 698.5,410.3 699.2,413.5 700.3,399.2 701.2,389.7 702.1,404.3 703.0,413.3 704.2,413.8 705.3,400.7 706.2,403.5 707.4,406.9 708.7,400.3 709.9,408.6 711.0,413.4 711.9,413.3 713.0,403.5 714.6,394.7 715.5,403.5 716.7,406.5 717.6,404.3 718.5,410.3 719.2,413.1 720.8,406.9 722.1,400.9 723.0,398.9 724.2,403.0 725.3,403.7 726.7,403.3 727.6,408.6 728.5,412.5 729.9,399.2 731.0,391.1 731.9,400.0 733.1,406.0 734.6,397.5 735.8,400.7 736.9,396.6 738.1,394.3 739.0,403.5 739.7,411.2 740.8,403.0 741.9,402.7 743.1,405.2 744.2,412.0 745.3,406.9 746.9,398.7 748.8,396.5 749.9,399.2 750.8,405.2 752.2,413.5 753.3,409.5 754.4,404.3 755.8,402.4 756.9,403.7 758.1,403.5 759.0,404.8 760.1,410.3 761.9,414.0 763.1,406.9 764.2,398.2 765.4,400.9 766.5,405.2 767.9,408.6 769.2,402.0 770.6,403.9 771.5,406.3 772.7,405.8 774.1,401.3 775.2,403.5 776.6,408.6 777.7,412.0 778.6,414.1 780.0,402.5 781.1,405.2 782.3,407.3 783.2,407.8 784.1,405.4 785.2,411.6 786.3,411.4 787.7,409.9 789.1,405.2 790.4,399.7 791.3,406.9 792.0,412.0 792.9,406.8 794.1,411.8 795.2,406.9 796.4,403.0 797.5,404.8 798.9,406.5 800.0,408.0 801.1,408.1 802.0,407.1 803.2,413.1 804.1,403.5 804.8,397.9 805.9,403.5 806.6,408.8 807.7,401.6 808.9,404.3 810.0,409.7 811.1,407.8 812.0,404.3 813.0,402.4 814.1,406.0 815.2,410.3 816.4,413.8 817.3,408.6 818.2,403.9 819.1,411.6 820.2,410.5 821.1,410.1 822.3,402.7 823.4,409.7 824.6,404.8 825.7,404.5 826.8,410.3 828.0,413.7 829.1,410.3 830.0,406.9 830.9,403.3 831.8,405.2 832.7,405.6 833.9,403.3 834.8,412.5 835.7,408.6 836.6,405.2 838.0,403.4 839.1,404.3 840.2,410.1 841.2,403.9 842.3,404.3 843.2,406.9 844.1,412.9 845.3,414.2 952.5,414.3" fill="none" stroke="#4477aa" stroke-width="0.9" stroke-linejoin="round"/>
<text x="53.50" y="443.30" font-size="15" font-weight="bold" fill="#808080" font-family='"Liberation Sans", sans-serif' textLength="91.00" lengthAdjust="spacingAndGlyphs" >Показатель 1</text>
<rect x="148.8" y="427" width="164.8" height="20.80000000000001" rx="3" fill="#fff" stroke="#e3e3e3" stroke-width="1"/>
<text x="158.50" y="444.00" font-size="11.5" font-weight="normal" fill="#595959" font-family='"Liberation Sans", sans-serif' textLength="113.50" lengthAdjust="spacingAndGlyphs" >Первичные продажи</text>
<path d="M293.5 434.5h9l-4.5 5.8z" fill="#404040"/>
<text x="330.50" y="443.30" font-size="15" font-weight="bold" fill="#808080" font-family='"Liberation Sans", sans-serif' textLength="160.00" lengthAdjust="spacingAndGlyphs" >Дискретность периода</text>
<rect x="493.3" y="427" width="136.49999999999994" height="20.80000000000001" rx="3" fill="#fff" stroke="#e3e3e3" stroke-width="1"/>
<text x="503.50" y="444.00" font-size="11.5" font-weight="normal" fill="#595959" font-family='"Liberation Sans", sans-serif' textLength="57.50" lengthAdjust="spacingAndGlyphs" >Год-Месяц</text>
<path d="M611 434.5h9l-4.5 5.8z" fill="#404040"/>
<text x="647.00" y="443.30" font-size="15" font-weight="bold" fill="#808080" font-family='"Liberation Sans", sans-serif' textLength="92.00" lengthAdjust="spacingAndGlyphs" >Показатель 2</text>
<rect x="742.2" y="427" width="165.0" height="20.80000000000001" rx="3" fill="#fff" stroke="#e3e3e3" stroke-width="1"/>
<text x="752.00" y="444.00" font-size="11.5" font-weight="normal" fill="#595959" font-family='"Liberation Sans", sans-serif' textLength="69.00" lengthAdjust="spacingAndGlyphs" >Маржа перв.</text>
<path d="M888 434.5h9l-4.5 5.8z" fill="#404040"/>
<text x="13.00" y="491.00" font-size="13.3" font-weight="bold" fill="#636363" font-family='"Liberation Sans", sans-serif' textLength="247.00" lengthAdjust="spacingAndGlyphs" >Первичные продажи / Маржа перв.</text>
<text x="13.00" y="507.50" font-size="11.5" font-weight="normal" fill="#808080" font-family='"Liberation Sans", sans-serif' textLength="428.00" lengthAdjust="spacingAndGlyphs" >Столбики - Первичные продажи (ось слева), линия - Маржа перв. (ось справа)</text>
<g stroke="#cccccc" stroke-width="1" fill="none"><path d="M100.2 523.5H866.2"/><path d="M100.2 589.5H866.2"/><path d="M100.2 656.5H866.2"/></g>
<g stroke="#cccccc" stroke-width="1" fill="none"><path d="M108.5 523.5V656.5"/><path d="M857.5 523.5V656.5"/></g>
<rect x="113.5" y="598.2" width="21.6" height="58.1" fill="#4477aa"/>
<rect x="144.7" y="586.2" width="21.6" height="70.1" fill="#4477aa"/>
<rect x="175.9" y="574.6" width="21.6" height="81.7" fill="#4477aa"/>
<rect x="207.1" y="572.6" width="21.6" height="83.7" fill="#4477aa"/>
<rect x="238.3" y="570.1" width="21.6" height="86.2" fill="#4477aa"/>
<rect x="269.5" y="587.2" width="21.6" height="69.1" fill="#4477aa"/>
<rect x="300.8" y="583.1" width="21.6" height="73.2" fill="#4477aa"/>
<rect x="332.0" y="597.2" width="21.6" height="59.1" fill="#4477aa"/>
<rect x="363.2" y="602.7" width="21.6" height="53.6" fill="#4477aa"/>
<rect x="394.4" y="603.7" width="21.6" height="52.6" fill="#4477aa"/>
<rect x="425.6" y="604.7" width="21.6" height="51.6" fill="#4477aa"/>
<rect x="456.8" y="604.7" width="21.6" height="51.6" fill="#4477aa"/>
<rect x="488.0" y="602.3" width="21.6" height="54.0" fill="#4477aa"/>
<rect x="519.2" y="592.8" width="21.6" height="63.5" fill="#4477aa"/>
<rect x="550.4" y="589.8" width="21.6" height="66.5" fill="#4477aa"/>
<rect x="581.6" y="571.9" width="21.6" height="84.4" fill="#4477aa"/>
<rect x="612.8" y="584.9" width="21.6" height="71.4" fill="#4477aa"/>
<rect x="644.0" y="590.3" width="21.6" height="66.0" fill="#4477aa"/>
<rect x="675.3" y="597.3" width="21.6" height="59.0" fill="#4477aa"/>
<rect x="706.5" y="603.8" width="21.6" height="52.5" fill="#4477aa"/>
<clipPath id="c2"><rect x="100" y="515" width="770" height="141.5"/></clipPath>
<polyline points="124.3,587.2 155.5,572.1 186.7,557.6 217.9,556.1 249.1,552.6 280.3,574.1 311.6,568.6 342.8,586.2 374.0,591.7 405.2,593.2 436.4,594.7 467.6,594.7 498.8,605.8 530.0,596.3 561.2,593.8 592.4,588.8 623.6,591.8 654.8,602.3 686.1,607.3 717.3,625.3 748.5,656.2 779.7,656.2 810.9,656.2 842.1,656.2" fill="none" stroke="#cc6677" stroke-width="1" clip-path="url(#c2)"/>
<g fill="#cc6677" clip-path="url(#c2)"><circle cx="124.3" cy="587.2" r="2.8"/><circle cx="155.5" cy="572.1" r="2.8"/><circle cx="186.7" cy="557.6" r="2.8"/><circle cx="217.9" cy="556.1" r="2.8"/><circle cx="249.1" cy="552.6" r="2.8"/><circle cx="280.3" cy="574.1" r="2.8"/><circle cx="311.6" cy="568.6" r="2.8"/><circle cx="342.8" cy="586.2" r="2.8"/><circle cx="374.0" cy="591.7" r="2.8"/><circle cx="405.2" cy="593.2" r="2.8"/><circle cx="436.4" cy="594.7" r="2.8"/><circle cx="467.6" cy="594.7" r="2.8"/><circle cx="498.8" cy="605.8" r="2.8"/><circle cx="530.0" cy="596.3" r="2.8"/><circle cx="561.2" cy="593.8" r="2.8"/><circle cx="592.4" cy="588.8" r="2.8"/><circle cx="623.6" cy="591.8" r="2.8"/><circle cx="654.8" cy="602.3" r="2.8"/><circle cx="686.1" cy="607.3" r="2.8"/><circle cx="717.3" cy="625.3" r="2.8"/><circle cx="748.5" cy="656.2" r="2.8"/><circle cx="779.7" cy="656.2" r="2.8"/><circle cx="810.9" cy="656.2" r="2.8"/><circle cx="842.1" cy="656.2" r="2.8"/></g>
<text x="23.70" y="533.80" font-size="10.5" fill="#6c6c6c" font-family='"DejaVu Sans Mono", monospace' style="word-spacing:-3.4px" textLength="72.60" lengthAdjust="spacingAndGlyphs">20 000 000,00</text>
<text x="23.70" y="594.00" font-size="10.5" fill="#6c6c6c" font-family='"DejaVu Sans Mono", monospace' style="word-spacing:-3.4px" textLength="72.60" lengthAdjust="spacingAndGlyphs">10 000 000,00</text>
<text x="74.20" y="660.80" font-size="10.5" fill="#6c6c6c" font-family='"DejaVu Sans Mono", monospace' style="word-spacing:-3.4px" textLength="22.10" lengthAdjust="spacingAndGlyphs">0,00</text>
<text x="870.70" y="533.80" font-size="10.5" fill="#6c6c6c" font-family='"DejaVu Sans Mono", monospace' style="word-spacing:-3.4px" textLength="73.30" lengthAdjust="spacingAndGlyphs">10 000 000,00</text>
<text x="870.70" y="594.00" font-size="10.5" fill="#6c6c6c" font-family='"DejaVu Sans Mono", monospace' style="word-spacing:-3.4px" textLength="66.90" lengthAdjust="spacingAndGlyphs">5 000 000,00</text>
<text x="870.70" y="660.80" font-size="10.5" fill="#6c6c6c" font-family='"DejaVu Sans Mono", monospace' style="word-spacing:-3.4px" textLength="21.50" lengthAdjust="spacingAndGlyphs">0,00</text>
<text transform="translate(130.4,665.8) rotate(-40)" text-anchor="end" font-size="10.2" fill="#6c6c6c" font-family='"DejaVu Sans Mono", monospace'>2011<tspan dx="-1" letter-spacing="-1">-</tspan>я<tspan letter-spacing="-3.3">..</tspan>.</text>
<text transform="translate(161.6,665.8) rotate(-40)" text-anchor="end" font-size="10.2" fill="#6c6c6c" font-family='"DejaVu Sans Mono", monospace'>2011<tspan dx="-1" letter-spacing="-1">-</tspan>ф<tspan letter-spacing="-3.3">..</tspan>.</text>
<text transform="translate(192.8,665.8) rotate(-40)" text-anchor="end" font-size="10.2" fill="#6c6c6c" font-family='"DejaVu Sans Mono", monospace'>2011<tspan dx="-1" letter-spacing="-1">-</tspan>м<tspan letter-spacing="-3.3">..</tspan>.</text>
<text transform="translate(224.0,665.8) rotate(-40)" text-anchor="end" font-size="10.2" fill="#6c6c6c" font-family='"DejaVu Sans Mono", monospace'>2011<tspan dx="-1" letter-spacing="-1">-</tspan>а<tspan letter-spacing="-3.3">..</tspan>.</text>
<text transform="translate(255.2,665.8) rotate(-40)" text-anchor="end" font-size="10.2" fill="#6c6c6c" font-family='"DejaVu Sans Mono", monospace'>2011<tspan dx="-1" letter-spacing="-1">-</tspan>м<tspan letter-spacing="-3.3">..</tspan>.</text>
<text transform="translate(286.4,665.8) rotate(-40)" text-anchor="end" font-size="10.2" fill="#6c6c6c" font-family='"DejaVu Sans Mono", monospace'>2011<tspan dx="-1" letter-spacing="-1">-</tspan>и<tspan letter-spacing="-3.3">..</tspan>.</text>
<text transform="translate(317.7,665.8) rotate(-40)" text-anchor="end" font-size="10.2" fill="#6c6c6c" font-family='"DejaVu Sans Mono", monospace'>2011<tspan dx="-1" letter-spacing="-1">-</tspan>и<tspan letter-spacing="-3.3">..</tspan>.</text>
<text transform="translate(347.6,666.8) rotate(-40)" text-anchor="end" font-size="10.2" fill="#6c6c6c" font-family='"DejaVu Sans Mono", monospace'>2011<tspan dx="-1" letter-spacing="-1">-</tspan>авг</text>
<text transform="translate(380.1,665.8) rotate(-40)" text-anchor="end" font-size="10.2" fill="#6c6c6c" font-family='"DejaVu Sans Mono", monospace'>2011<tspan dx="-1" letter-spacing="-1">-</tspan>с<tspan letter-spacing="-3.3">..</tspan>.</text>
<text transform="translate(410.0,666.8) rotate(-40)" text-anchor="end" font-size="10.2" fill="#6c6c6c" font-family='"DejaVu Sans Mono", monospace'>2011<tspan dx="-1" letter-spacing="-1">-</tspan>окт</text>
<text transform="translate(442.5,665.8) rotate(-40)" text-anchor="end" font-size="10.2" fill="#6c6c6c" font-family='"DejaVu Sans Mono", monospace'>2011<tspan dx="-1" letter-spacing="-1">-</tspan>н<tspan letter-spacing="-3.3">..</tspan>.</text>
<text transform="translate(473.7,665.8) rotate(-40)" text-anchor="end" font-size="10.2" fill="#6c6c6c" font-family='"DejaVu Sans Mono", monospace'>2011<tspan dx="-1" letter-spacing="-1">-</tspan>д<tspan letter-spacing="-3.3">..</tspan>.</text>
<text transform="translate(504.9,665.8) rotate(-40)" text-anchor="end" font-size="10.2" fill="#6c6c6c" font-family='"DejaVu Sans Mono", monospace'>2012<tspan dx="-1" letter-spacing="-1">-</tspan>я<tspan letter-spacing="-3.3">..</tspan>.</text>
<text transform="translate(536.1,665.8) rotate(-40)" text-anchor="end" font-size="10.2" fill="#6c6c6c" font-family='"DejaVu Sans Mono", monospace'>2012<tspan dx="-1" letter-spacing="-1">-</tspan>ф<tspan letter-spacing="-3.3">..</tspan>.</text>
<text transform="translate(567.3,665.8) rotate(-40)" text-anchor="end" font-size="10.2" fill="#6c6c6c" font-family='"DejaVu Sans Mono", monospace'>2012<tspan dx="-1" letter-spacing="-1">-</tspan>м<tspan letter-spacing="-3.3">..</tspan>.</text>
<text transform="translate(598.5,665.8) rotate(-40)" text-anchor="end" font-size="10.2" fill="#6c6c6c" font-family='"DejaVu Sans Mono", monospace'>2012<tspan dx="-1" letter-spacing="-1">-</tspan>а<tspan letter-spacing="-3.3">..</tspan>.</text>
<text transform="translate(629.7,665.8) rotate(-40)" text-anchor="end" font-size="10.2" fill="#6c6c6c" font-family='"DejaVu Sans Mono", monospace'>2012<tspan dx="-1" letter-spacing="-1">-</tspan>м<tspan letter-spacing="-3.3">..</tspan>.</text>
<text transform="translate(660.9,665.8) rotate(-40)" text-anchor="end" font-size="10.2" fill="#6c6c6c" font-family='"DejaVu Sans Mono", monospace'>2012<tspan dx="-1" letter-spacing="-1">-</tspan>и<tspan letter-spacing="-3.3">..</tspan>.</text>
<text transform="translate(692.2,665.8) rotate(-40)" text-anchor="end" font-size="10.2" fill="#6c6c6c" font-family='"DejaVu Sans Mono", monospace'>2012<tspan dx="-1" letter-spacing="-1">-</tspan>и<tspan letter-spacing="-3.3">..</tspan>.</text>
<text transform="translate(722.1,666.8) rotate(-40)" text-anchor="end" font-size="10.2" fill="#6c6c6c" font-family='"DejaVu Sans Mono", monospace'>2012<tspan dx="-1" letter-spacing="-1">-</tspan>авг</text>
<text transform="translate(754.6,665.8) rotate(-40)" text-anchor="end" font-size="10.2" fill="#6c6c6c" font-family='"DejaVu Sans Mono", monospace'>2012<tspan dx="-1" letter-spacing="-1">-</tspan>с<tspan letter-spacing="-3.3">..</tspan>.</text>
<text transform="translate(784.5,666.8) rotate(-40)" text-anchor="end" font-size="10.2" fill="#6c6c6c" font-family='"DejaVu Sans Mono", monospace'>2012<tspan dx="-1" letter-spacing="-1">-</tspan>окт</text>
<text transform="translate(817.0,665.8) rotate(-40)" text-anchor="end" font-size="10.2" fill="#6c6c6c" font-family='"DejaVu Sans Mono", monospace'>2012<tspan dx="-1" letter-spacing="-1">-</tspan>н<tspan letter-spacing="-3.3">..</tspan>.</text>
<text transform="translate(848.2,665.8) rotate(-40)" text-anchor="end" font-size="10.2" fill="#6c6c6c" font-family='"DejaVu Sans Mono", monospace'>2012<tspan dx="-1" letter-spacing="-1">-</tspan>д<tspan letter-spacing="-3.3">..</tspan>.</text>
</svg>
</body></html>
